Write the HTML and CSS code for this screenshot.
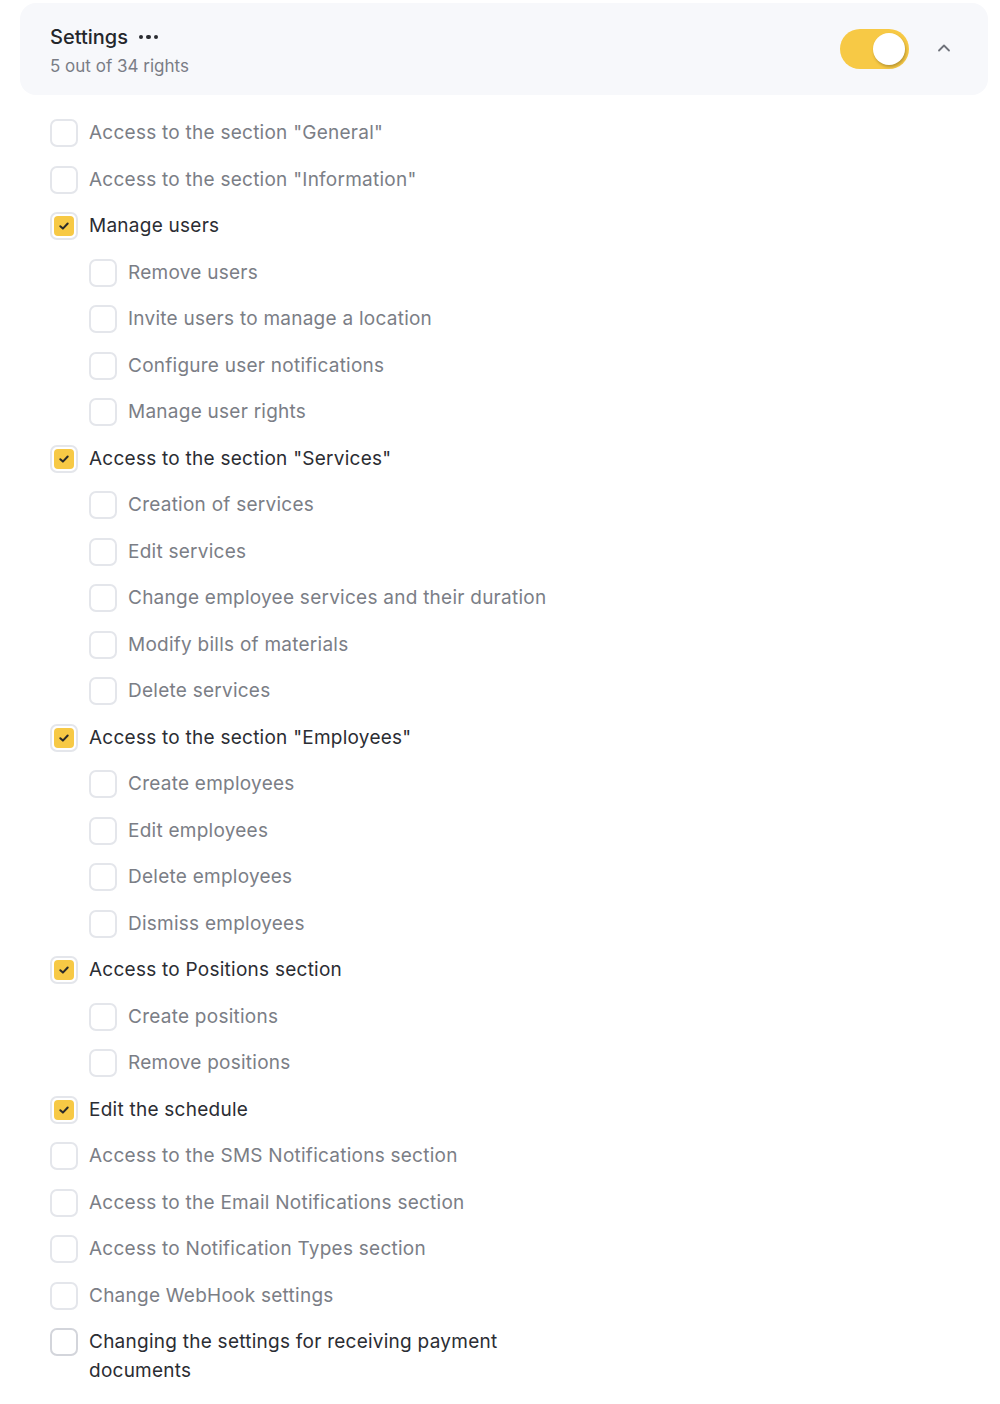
FILE: index.html
```html
<!DOCTYPE html>
<html>
<head>
<meta charset="utf-8">
<link rel="stylesheet" href="styles.css">
</head>
<body>
<div class="page">
  <div class="header">
    <div class="titles">
      <div class="title">Settings <span class="dots"><i></i><i></i><i></i></span></div>
      <div class="subtitle">5 out of 34 rights</div>
    </div>
    <div class="controls">
      <div class="toggle"><div class="knob"></div></div>
      <svg class="chevron" width="14" height="9" viewBox="0 0 14 9"><path d="M2 7.5 L7 2.5 L12 7.5" fill="none" stroke="#6f727a" stroke-width="1.8" stroke-linecap="round" stroke-linejoin="round"/></svg>
    </div>
  </div>
  <ul class="list">
    <li class="row"><span class="box"></span><span class="label">Access to the section "General"</span></li>
    <li class="row"><span class="box"></span><span class="label">Access to the section "Information"</span></li>
    <li class="row on"><span class="box"><span class="fill"><svg width="12" height="10" viewBox="0 0 12 10"><path d="M2.3 5.2 L4.9 7.6 L9.7 2.5" fill="none" stroke="#2a2a2a" stroke-width="2" stroke-linecap="round" stroke-linejoin="round"/></svg></span></span><span class="label">Manage users</span></li>
    <li class="row sub"><span class="box"></span><span class="label">Remove users</span></li>
    <li class="row sub"><span class="box"></span><span class="label">Invite users to manage a location</span></li>
    <li class="row sub"><span class="box"></span><span class="label">Configure user notifications</span></li>
    <li class="row sub"><span class="box"></span><span class="label">Manage user rights</span></li>
    <li class="row on"><span class="box"><span class="fill"><svg width="12" height="10" viewBox="0 0 12 10"><path d="M2.3 5.2 L4.9 7.6 L9.7 2.5" fill="none" stroke="#2a2a2a" stroke-width="2" stroke-linecap="round" stroke-linejoin="round"/></svg></span></span><span class="label">Access to the section "Services"</span></li>
    <li class="row sub"><span class="box"></span><span class="label">Creation of services</span></li>
    <li class="row sub"><span class="box"></span><span class="label">Edit services</span></li>
    <li class="row sub"><span class="box"></span><span class="label">Change employee services and their duration</span></li>
    <li class="row sub"><span class="box"></span><span class="label">Modify bills of materials</span></li>
    <li class="row sub"><span class="box"></span><span class="label">Delete services</span></li>
    <li class="row on"><span class="box"><span class="fill"><svg width="12" height="10" viewBox="0 0 12 10"><path d="M2.3 5.2 L4.9 7.6 L9.7 2.5" fill="none" stroke="#2a2a2a" stroke-width="2" stroke-linecap="round" stroke-linejoin="round"/></svg></span></span><span class="label">Access to the section "Employees"</span></li>
    <li class="row sub"><span class="box"></span><span class="label">Create employees</span></li>
    <li class="row sub"><span class="box"></span><span class="label">Edit employees</span></li>
    <li class="row sub"><span class="box"></span><span class="label">Delete employees</span></li>
    <li class="row sub"><span class="box"></span><span class="label">Dismiss employees</span></li>
    <li class="row on"><span class="box"><span class="fill"><svg width="12" height="10" viewBox="0 0 12 10"><path d="M2.3 5.2 L4.9 7.6 L9.7 2.5" fill="none" stroke="#2a2a2a" stroke-width="2" stroke-linecap="round" stroke-linejoin="round"/></svg></span></span><span class="label">Access to Positions section</span></li>
    <li class="row sub"><span class="box"></span><span class="label">Create positions</span></li>
    <li class="row sub"><span class="box"></span><span class="label">Remove positions</span></li>
    <li class="row on"><span class="box"><span class="fill"><svg width="12" height="10" viewBox="0 0 12 10"><path d="M2.3 5.2 L4.9 7.6 L9.7 2.5" fill="none" stroke="#2a2a2a" stroke-width="2" stroke-linecap="round" stroke-linejoin="round"/></svg></span></span><span class="label">Edit the schedule</span></li>
    <li class="row"><span class="box"></span><span class="label">Access to the SMS Notifications section</span></li>
    <li class="row"><span class="box"></span><span class="label">Access to the Email Notifications section</span></li>
    <li class="row"><span class="box"></span><span class="label">Access to Notification Types section</span></li>
    <li class="row"><span class="box"></span><span class="label">Change WebHook settings</span></li>
    <li class="row hover"><span class="box"></span><span class="label">Changing the settings for receiving payment documents</span></li>
  </ul>
</div>
</body>
</html>
```

FILE: styles.css
```css
* { box-sizing: border-box; }
body {
  margin: 0;
  background: #ffffff;
  font-family: Inter, "Noto Sans", sans-serif;
  -webkit-font-smoothing: antialiased;
}
.page {
  padding: 3px 12px 0 20px;
}
.header {
  display: flex;
  align-items: center;
  justify-content: space-between;
  height: 92px;
  background: #f7f8fb;
  border-radius: 16px;
  padding: 0 37px 0 30px;
}
.titles {
  display: flex;
  flex-direction: column;
  gap: 5px;
  margin-top: 4px;
}
.title {
  font-size: 20px;
  color: #24262b;
  font-weight: 500;
  display: flex;
  align-items: center;
  gap: 11px;
  line-height: 24px;
}
.dots {
  display: inline-flex;
  gap: 3px;
  margin-top: 1px;
}
.dots i {
  width: 4.5px;
  height: 4.5px;
  border-radius: 50%;
  background: #2a2c31;
}
.subtitle {
  font-size: 17px;
  color: #7a7d86;
  line-height: 24px;
}
.controls {
  display: flex;
  align-items: center;
  gap: 28px;
}
.toggle {
  width: 69px;
  height: 40px;
  border-radius: 20px;
  background: #f7c945;
  padding: 4px;
  display: flex;
  justify-content: flex-end;
}
.knob {
  width: 32px;
  height: 32px;
  border-radius: 50%;
  background: #fff;
  box-shadow: 1px 2px 3px rgba(0,0,0,0.25);
}
.chevron { display: block; margin-top: -3px; }
.list {
  list-style: none;
  margin: 0;
  padding: 23px 0 0 30px;
}
.row {
  display: flex;
  align-items: flex-start;
  gap: 11px;
  min-height: 46.5px;
  font-size: 19px;
  line-height: 29px;
  color: #7b7e86;
  letter-spacing: 0.25px;
}
.row.sub { padding-left: 39px; }
.row.on, .row.hover { color: #2b2d33; }
.box {
  flex: none;
  width: 28px;
  height: 28px;
  border: 2px solid #e4e6eb;
  border-radius: 7px;
  padding: 2px;
  margin-top: 1px;
  background: #fff;
}
.row.hover .box { border-color: #d3d5db; }
.fill {
  display: flex;
  align-items: center;
  justify-content: center;
  width: 20px;
  height: 20px;
  border-radius: 4px;
  background: #f7c945;
}
.fill svg { display: block; }
.label { max-width: 425px; }
```
